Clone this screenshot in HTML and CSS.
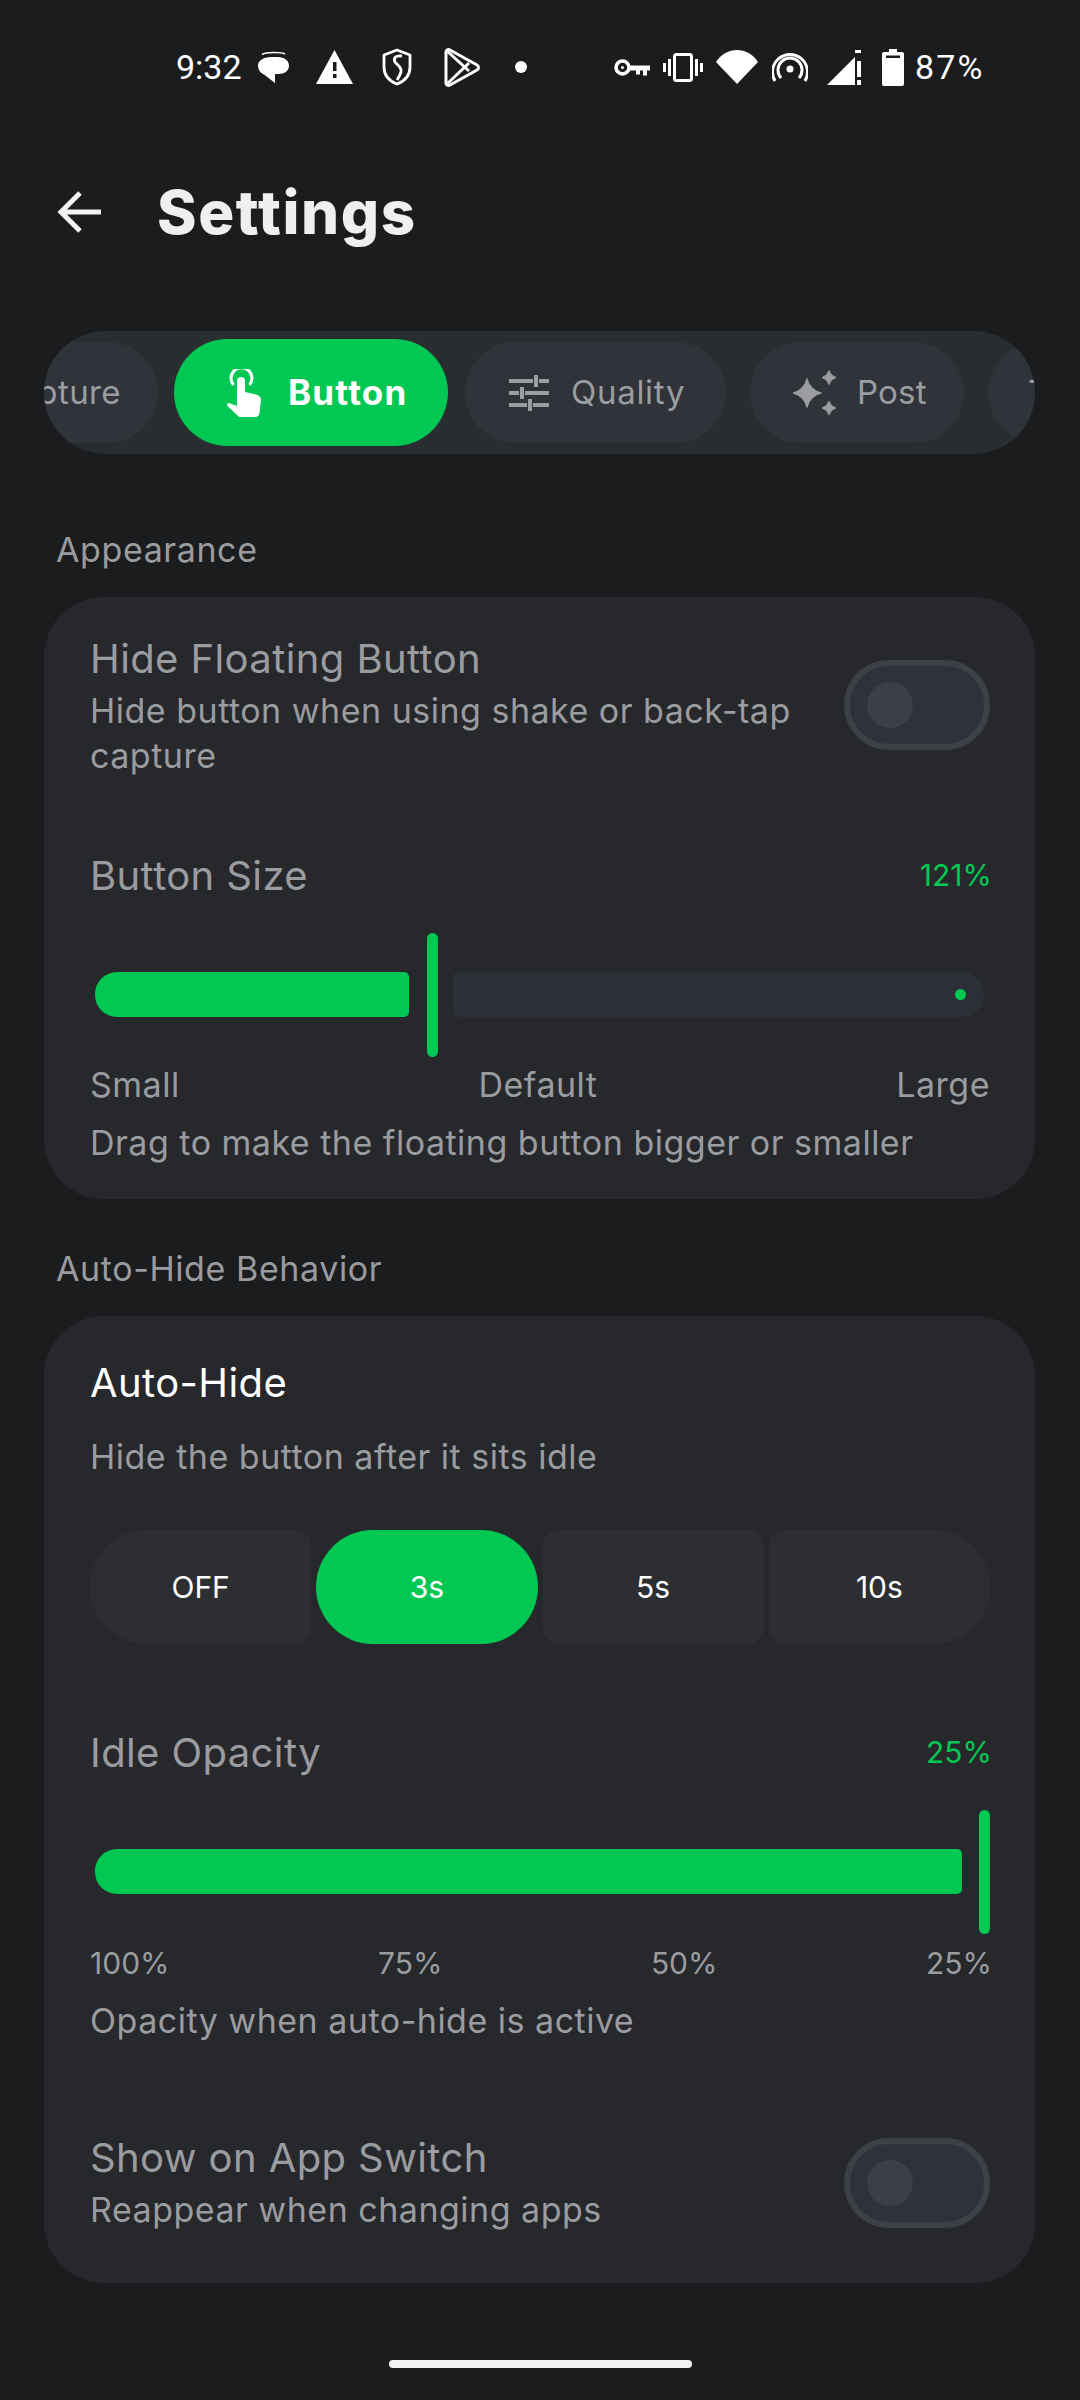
FILE: index.html
```html
<!DOCTYPE html>
<html lang="en">
<head>
<meta charset="utf-8">
<title>Settings</title>
<link rel="stylesheet" href="styles.css">
</head>
<body>
<div class="page">
  <div class="status">
    <span class="clock">9:32</span>
    <svg class="i-msg" viewBox="0 0 33 33"><path d="M5 3.500C9 1 24 1 28 3" fill="none" stroke="#fff" stroke-width="1.600"/><path d="M14 6h7c6 0 11 3.500 11 8.500S28 23 21 23h-3v9L7 23.500C3 22 1 18 1 14.500 1 9.500 7 6 14 6z" fill="#fff"/></svg>
    <svg class="i-warn" viewBox="0 0 37 34"><path d="M18.500 0L37 34H0z" fill="#fff"/><path d="M17 12h3.500v9H17zM17 24h3.500v4H17z" fill="#1b1c1e"/></svg>
    <svg class="i-shield" viewBox="0 0 30 38"><path d="M15 2l13 5v12c0 8-5 14-13 17C7 33 2 27 2 19V7z" fill="none" stroke="#fff" stroke-width="2.800" stroke-linejoin="round"/><path d="M20 8c-6-1-9 2-7 6 2 3 7 5 6 10-1 3-2 5-4 8" fill="none" stroke="#fff" stroke-width="2.800"/></svg>
    <svg class="i-play" viewBox="0 0 36 39"><path d="M2 4c0-2 2-3 4-2l27 15c2 1 2 4 0 5L6 37c-2 1-4 0-4-2z" fill="none" stroke="#fff" stroke-width="3" stroke-linejoin="round"/><path d="M3 3l22 20M3 36l22-21" fill="none" stroke="#fff" stroke-width="3"/></svg>
    <span class="dot-note"></span>
    <svg class="i-key" viewBox="0 0 36 17"><circle cx="8.500" cy="8.500" r="6.500" fill="none" stroke="#fff" stroke-width="3.500"/><path d="M14 6.500h22v5h-3v5h-4v-5h-3v4h-4v-4h-8z" fill="#fff"/><circle cx="8.500" cy="8.500" r="1.500" fill="#fff"/></svg>
    <svg class="i-vib" viewBox="0 0 40 29"><rect x="11.500" y="1.500" width="17" height="26" rx="2" fill="none" stroke="#fff" stroke-width="3"/><path d="M1.500 10v9M6.500 6v17M33.500 6v17M38.500 10v9" stroke="#fff" stroke-width="3" fill="none"/></svg>
    <svg class="i-wifi" viewBox="0 0 42 34"><path d="M21 34L0 12C5 4 13 0 21 0s16 4 21 12z" fill="#fff"/></svg>
    <svg class="i-spot" viewBox="0 0 36 30"><circle cx="18" cy="17" r="3.500" fill="#fff"/><path d="M9 26a12 12 0 1 1 18 0M3 29a17.500 17.500 0 1 1 30 0" fill="none" stroke="#fff" stroke-width="3"/></svg>
    <svg class="i-sig" viewBox="0 0 35 35"><path d="M0 35L28 7v28z" fill="#fff"/><path d="M28 0h6v3h-6z" fill="#fff"/><path d="M30 11h4v16h-4zM30 30h4v5h-4z" fill="#fff"/></svg>
    <svg class="i-bat" viewBox="0 0 22 37"><path d="M7 0h8v3h5a2 2 0 0 1 2 2v30a2 2 0 0 1-2 2H2a2 2 0 0 1-2-2V5a2 2 0 0 1 2-2h5z" fill="#fff"/><rect x="4" y="6.500" width="14" height="2.500" fill="#1b1c1e"/></svg>
    <span class="pct">87%</span>
  </div>

  <header class="top">
    <svg class="i-back" viewBox="0 0 46 44"><path d="M45 22H5M24 3L5 22l19 19" fill="none" stroke="#f2f2f3" stroke-width="5"/></svg>
    <h1 class="title">Settings</h1>
  </header>

  <nav class="tabs">
    <div class="track">
      <div class="tab tab-capture"><span class="tab-text">Capture</span></div>
      <div class="tab tab-active">
        <svg class="i-hand" viewBox="0 0 34 48"><path d="M6.500 16a10.500 10.500 0 1 1 16 0" fill="none" stroke="#fff" stroke-width="3"/><path d="M10 12a4 4 0 0 1 8 0v11l9 2c4 1 7 2 7 6l-1.500 13c-.3 2.500-2 4-4 4H14c-1.500 0-2.500-.5-3.500-1.500L1 37.500c-1.500-1.500-1-3.500 1-3.500l8 3z" fill="#fff"/></svg>
        <span class="tab-text">Button</span>
      </div>
      <div class="tab tab-quality">
        <svg class="i-tune" viewBox="0 0 40 36"><path d="M0 6h24M30 6h10M27 0v12M0 18h10M16 18h24M13 12v12M0 30h18M24 30h16M21 24v12" fill="none" stroke="#9b9da1" stroke-width="4"/></svg>
        <span class="tab-text">Quality</span>
      </div>
      <div class="tab tab-post">
        <svg class="i-spark" viewBox="0 0 44 46"><path d="M14 8.500Q17 20 28.500 23 17 26 14 37.500 11 26 0 23 11 20 14 8.500zM36 .5Q37.500 6 43 7.500 37.500 9 36 14.500 34.500 9 29 7.500 34.500 6 36 .5zM36 31Q37.500 36.500 43 38 37.500 39.500 36 45 34.500 39.500 29 38 34.500 36.500 36 31z" fill="#9b9da1" stroke="#9b9da1" stroke-linejoin="round"/></svg>
        <span class="tab-text">Post</span>
      </div>
      <div class="tab tab-next"><span class="tab-text">Theme</span></div>
    </div>
  </nav>

  <h2 class="section section-first">Appearance</h2>
  <section class="card card-a">
    <div class="row">
      <div class="row-text">
        <div class="name muted">Hide Floating Button</div>
        <div class="sub">Hide button when using shake or back-tap capture</div>
      </div>
      <span class="toggle toggle-top"><span class="knob"></span></span>
    </div>
    <div class="head head-size"><span class="name muted">Button Size</span><span class="value">121%</span></div>
    <div class="slider">
      <span class="fill fill-size"></span>
      <span class="thumb"></span>
      <span class="rest"><span class="stop"></span></span>
    </div>
    <div class="ticks"><span>Small</span><span>Default</span><span>Large</span></div>
    <div class="sub help">Drag to make the floating button bigger or smaller</div>
  </section>

  <h2 class="section">Auto-Hide Behavior</h2>
  <section class="card card-b">
    <div class="name white">Auto-Hide</div>
    <div class="sub sub-auto">Hide the button after it sits idle</div>
    <div class="seg">
      <span class="opt opt-first">OFF</span>
      <span class="opt opt-on">3s</span>
      <span class="opt">5s</span>
      <span class="opt opt-last">10s</span>
    </div>
    <div class="rule rule-one"></div>
    <div class="head head-idle"><span class="name muted">Idle Opacity</span><span class="value">25%</span></div>
    <div class="slider">
      <span class="fill fill-idle"></span>
      <span class="thumb thumb-idle"></span>
    </div>
    <div class="ticks ticks-idle"><span>100%</span><span>75%</span><span>50%</span><span>25%</span></div>
    <div class="sub help">Opacity when auto-hide is active</div>
    <div class="rule rule-two"></div>
    <div class="row row-app">
      <div class="row-text">
        <div class="name muted">Show on App Switch</div>
        <div class="sub">Reappear when changing apps</div>
      </div>
      <span class="toggle"><span class="knob"></span></span>
    </div>
  </section>

  <div class="home"></div>
</div>
</body>
</html>
```

FILE: styles.css
```css
* { box-sizing: border-box; }
html, body { margin: 0; padding: 0; }
body { background: #1b1c1e; font-family: "Inter", "Noto Sans", sans-serif; }
.page { width: 1080px; height: 2400px; overflow: hidden; background: #1b1c1e; }

.status { height: 134px; padding-left: 176px; display: flex; align-items: center; color: #fff; font-family: "Roboto", sans-serif; font-size: 34px; }
.status svg { display: block; flex: none; }
.clock { width: 65px; }
.i-msg { width: 33px; height: 33px; margin-left: 16px; }
.i-warn { width: 37px; height: 34px; margin-left: 26px; }
.i-shield { width: 30px; height: 38px; margin-left: 29px; }
.i-play { width: 36px; height: 39px; margin-left: 32px; }
.dot-note { width: 12px; height: 12px; border-radius: 50%; background: #fff; margin-left: 35px; }
.i-key { width: 36px; height: 17px; margin-left: 87px; }
.i-vib { width: 40px; height: 29px; margin-left: 13px; }
.i-wifi { width: 42px; height: 34px; margin-left: 13px; }
.i-spot { width: 36px; height: 30px; margin-left: 14px; }
.i-sig { width: 35px; height: 35px; margin-left: 19px; }
.i-bat { width: 22px; height: 37px; margin-left: 20px; }
.pct { margin-left: 11px; letter-spacing: 2.200px; }

.top { height: 156px; padding-left: 56px; display: flex; align-items: center; }
.i-back { width: 46px; height: 44px; flex: none; }
.title { margin: 0 0 0 55px; font-size: 60px; font-weight: 800; color: #eeeff1; letter-spacing: 1.600px; line-height: 70px; }

.tabs { margin: 41px 45px 0 44px; height: 123px; border-radius: 62px; background: #2a2d30; overflow: hidden; display: flex; align-items: center; }
.track { display: flex; align-items: center; flex: none; margin-left: -94px; gap: 24px; }
.tab { flex: none; height: 101px; border-radius: 51px; background: #303339; display: flex; align-items: center; color: #9b9da1; font-size: 33px; letter-spacing: .4px; }
.tab-text { white-space: nowrap; margin-top: -2px; }
.tab-capture { width: 208px; justify-content: flex-end; padding-right: 37px; }
.tab-active { width: 274px; height: 107px; border-radius: 54px; background: #00c853; color: #fff; font-size: 35px; font-weight: 700; letter-spacing: 1.200px; margin: 0 -7px 0 -8px; gap: 27px; padding-left: 53px; }
.tab-quality { width: 261px; gap: 22px; padding-left: 44px; letter-spacing: .7px; }
.tab-post { width: 214px; gap: 20px; padding-left: 43px; letter-spacing: .2px; }
.tab-next { width: 200px; padding-left: 40px; }
.i-hand { width: 34px; height: 48px; flex: none; }
.i-tune { width: 40px; height: 36px; flex: none; }
.i-spark { width: 44px; height: 46px; flex: none; }

.section { margin: 40px 0 17px 56px; height: 60px; line-height: 60px; font-size: 34px; letter-spacing: .6px; font-weight: 400; color: #9a9b9f; }
.section-first { margin-top: 66px; }

.card { margin: 0 45px 0 44px; padding: 0 45px 0 46px; background: #26282b; border-radius: 60px; }
.card-a { height: 602px; padding-top: 38px; }
.card-b { height: 967px; padding-top: 43px; }

.name { font-size: 40px; letter-spacing: .4px; line-height: 48px; margin-bottom: -2px; white-space: nowrap; }
.muted { color: #9a9ca0; }
.white { color: #fff; }
.sub { font-size: 34px; letter-spacing: .5px; line-height: 45px; color: #9a9ca0; }
.row { display: flex; align-items: center; justify-content: space-between; }
.row-text { width: 720px; }
.row-text .sub { margin-top: 7px; }
.toggle { flex: none; width: 146px; height: 90px; border-radius: 45px; background: #2f3238; border: 6px solid #3d4046; display: flex; align-items: center; padding-left: 17px; }
.toggle-top { margin-top: -3px; }
.knob { width: 46px; height: 46px; border-radius: 50%; background: #3c3f45; }

.head { display: flex; justify-content: space-between; align-items: center; height: 46px; }
.head-size { margin-top: 74px; }
.head-idle { margin-top: 41px; }
.value { font-size: 30px; color: #00c853; margin-right: -2px; }

.slider { margin-top: 35px; height: 124px; padding-left: 5px; display: flex; align-items: center; }
.fill { height: 45px; margin-bottom: 1px; background: #00c853; border-radius: 22px 5px 5px 22px; flex: none; }
.fill-size { width: 314px; }
.fill-idle { width: 867px; }
.thumb { width: 11px; height: 124px; border-radius: 6px; background: #00c853; margin-left: 18px; flex: none; }
.thumb-idle { margin-left: 17px; }
.rest { width: 531px; height: 45px; margin-bottom: 1px; margin-left: 15px; background: #2c2f36; border-radius: 5px 22px 22px 5px; display: flex; align-items: center; justify-content: flex-end; padding-right: 18px; }
.stop { width: 11px; height: 11px; border-radius: 50%; background: #00c853; }

.ticks { margin-top: 8px; height: 40px; line-height: 40px; display: flex; justify-content: space-between; font-size: 34px; letter-spacing: .5px; color: #9a9ca0; }
.ticks-idle { margin-top: 9px; margin-right: -2px; font-size: 30px; letter-spacing: 0; }
.help { margin-top: 15px; }

.sub-auto { margin-top: 29px; }
.seg { margin-top: 51px; height: 114px; display: flex; gap: 5px; }
.opt { flex: 1 1 0; display: flex; align-items: center; justify-content: center; background: #2c2e32; border-radius: 16px; color: #fff; font-size: 30px; }
.opt-first { border-radius: 57px 16px 16px 57px; }
.opt-last { border-radius: 16px 57px 57px 16px; }
.opt-on { background: #00c853; border-radius: 57px; }

.rule { height: 1px; background: #2b2d31; }
.rule-one { margin-top: 43px; }
.rule-two { margin-top: 34px; }
.row-app { margin-top: 56px; }

.home { width: 303px; height: 8px; border-radius: 4px; background: #f4f4f5; margin: 77px auto 0; }
```
